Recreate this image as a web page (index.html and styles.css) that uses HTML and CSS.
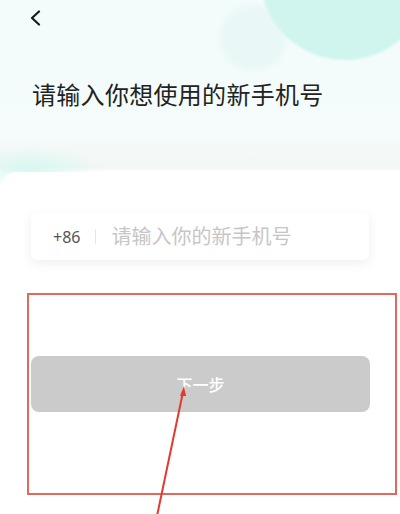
FILE: index.html
```html
<!DOCTYPE html>
<html lang="zh-CN">
<head>
    <meta charset="UTF-8">
    <meta name="viewport" content="width=device-width, initial-scale=1.0">
    <title>更换手机号</title>
    <link rel="stylesheet" href="styles.css">
</head>
<body>

<div class="page">
    <div class="nav">
        <a class="back" href="#">
            <svg width="14" height="16" viewBox="0 0 14 16">
                <path d="M10 1.5 L3 8 L10 14.5" fill="none" stroke="#1a1a1a" stroke-width="2.2" stroke-linecap="round" stroke-linejoin="round"/>
            </svg>
        </a>
    </div>

    <h1 class="title">请输入你想使用的新手机号</h1>

    <div class="card">
        <div class="phone-field">
            <span class="area-code">+86</span>
            <span class="divider"></span>
            <input type="tel" class="phone-input" placeholder="请输入你的新手机号">
        </div>

        <button class="next-btn" disabled>下一步</button>
    </div>

    <!-- annotation: highlight box and pointer -->
    <div class="mark-box"></div>
    <svg class="mark-arrow" width="400" height="514" viewBox="0 0 400 514">
        <line x1="157" y1="516" x2="183" y2="392" stroke="#e23a2c" stroke-width="2"/>
        <path d="M184 386 L180 396 L186 396 Z" fill="#e23a2c"/>
    </svg>
</div>

</body>
</html>
```

FILE: styles.css
```css
* {
    box-sizing: border-box;
    margin: 0;
    padding: 0;
}

body {
    font-family: "Noto Sans", "Noto Sans CJK SC", sans-serif;
    background: #fff;
    color: #222;
}

.page {
    position: relative;
    width: 400px;
    height: 514px;
    overflow: hidden;
    background:
        radial-gradient(circle at 345px -25px, #d0f5ef 0, #d0f5ef 83px, rgba(208, 245, 239, 0) 87px),
        radial-gradient(circle at 253px 38px, #e9f7f6 0, #e9f7f6 28px, rgba(233, 247, 246, 0) 38px),
        radial-gradient(ellipse 70px 22px at 30px 168px, #d7f7f1 0, rgba(215, 247, 241, 0) 100%),
        linear-gradient(180deg, #f2fcfb 0, #f5fcfb 130px, #f3f6f5 168px, #fff 172px);
}

.nav {
    height: 30px;
    padding: 9px 0 0 29px;
}

.back {
    display: inline-block;
    width: 14px;
    height: 16px;
}

.title {
    margin: 49px 0 0 32px;
    font-size: 24px;
    font-weight: 400;
    line-height: 32px;
    color: #222;
    letter-spacing: 0.3px;
}

.card {
    margin: 61px 2px 0;
    height: 400px;
    background: #fff;
    border-radius: 14px 14px 0 0;
    padding: 41px 28px 0 29px;
}

.phone-field {
    display: flex;
    align-items: center;
    height: 47px;
    margin-right: 1px;
    padding: 0 20px 0 22px;
    background: #fff;
    border-radius: 6px;
    box-shadow: 0 3px 12px rgba(0, 0, 0, 0.07);
}

.area-code {
    font-size: 16px;
    color: #555;
}

.divider {
    width: 1px;
    height: 15px;
    margin: 0 15px 0 15px;
    background: #e6e6e6;
}

.phone-input {
    flex: 1;
    min-width: 0;
    border: none;
    outline: none;
    background: transparent;
    font-family: inherit;
    font-size: 20px;
    color: #333;
}

.phone-input::placeholder {
    color: #c6c6c6;
}

.next-btn {
    display: block;
    width: 339px;
    height: 56px;
    margin-top: 96px;
    border: none;
    border-radius: 8px;
    background: #cbcbcb;
    color: #fff;
    font-family: inherit;
    font-size: 16px;
    font-weight: 500;
}

.mark-box {
    position: absolute;
    left: 27px;
    top: 293px;
    width: 370px;
    height: 202px;
    border: 2px solid #e0695e;
}

.mark-arrow {
    position: absolute;
    left: 0;
    top: 0;
    pointer-events: none;
}
```
